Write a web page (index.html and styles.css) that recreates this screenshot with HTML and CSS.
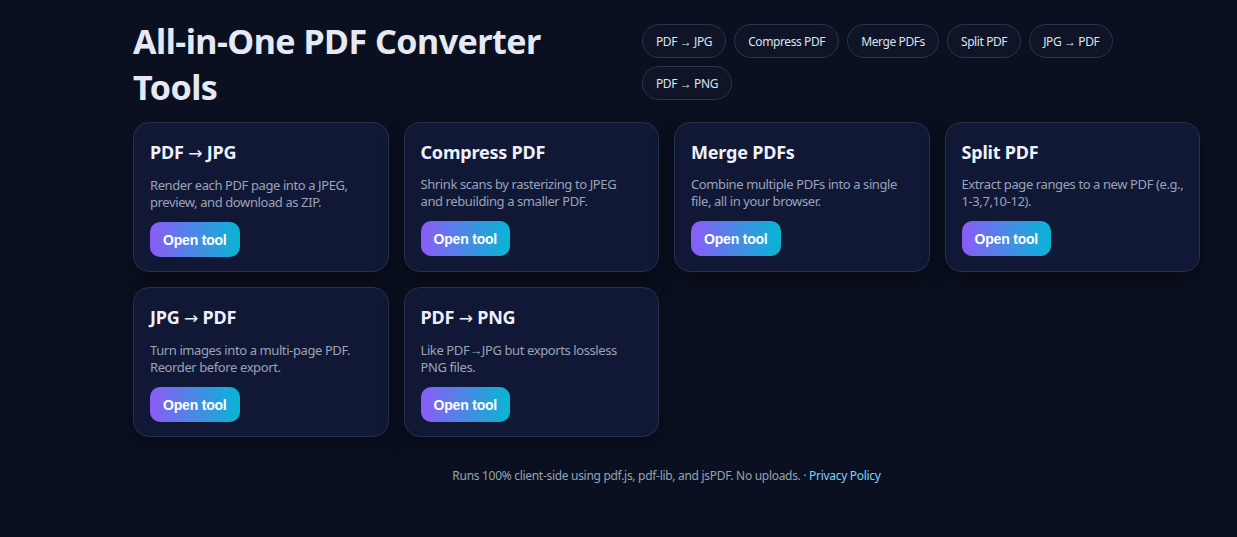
FILE: index.html
```html
<!DOCTYPE html>
<html lang="en">
<head>
<meta charset="utf-8">
<title>All-in-One PDF Converter Tools</title>
<link rel="stylesheet" href="styles.css">
</head>
<body>
<div class="wrap">
  <header class="top">
    <h1 class="title">All-in-One PDF Converter Tools</h1>
    <nav class="chips">
      <a class="chip" href="#">PDF → JPG</a>
      <a class="chip" href="#">Compress PDF</a>
      <a class="chip" href="#">Merge PDFs</a>
      <a class="chip" href="#">Split PDF</a>
      <a class="chip" href="#">JPG → PDF</a>
      <a class="chip" href="#">PDF → PNG</a>
    </nav>
  </header>
  <main class="grid">
    <section class="card">
      <h2 class="card-title">PDF <span class="arr">→</span> JPG</h2>
      <p class="card-desc">Render each PDF page into a JPEG, preview, and download as ZIP.</p>
      <a class="btn" href="#">Open tool</a>
    </section>
    <section class="card">
      <h2 class="card-title">Compress PDF</h2>
      <p class="card-desc">Shrink scans by rasterizing to JPEG<br>and rebuilding a smaller PDF.</p>
      <a class="btn" href="#">Open tool</a>
    </section>
    <section class="card">
      <h2 class="card-title">Merge PDFs</h2>
      <p class="card-desc">Combine multiple PDFs into a single file, all in your browser.</p>
      <a class="btn" href="#">Open tool</a>
    </section>
    <section class="card">
      <h2 class="card-title">Split PDF</h2>
      <p class="card-desc">Extract page ranges to a new PDF (e.g., 1-3,7,10-12).</p>
      <a class="btn" href="#">Open tool</a>
    </section>
    <section class="card">
      <h2 class="card-title">JPG <span class="arr">→</span> PDF</h2>
      <p class="card-desc">Turn images into a multi-page PDF. Reorder before export.</p>
      <a class="btn" href="#">Open tool</a>
    </section>
    <section class="card">
      <h2 class="card-title">PDF <span class="arr">→</span> PNG</h2>
      <p class="card-desc">Like PDF→JPG but exports lossless PNG files.</p>
      <a class="btn" href="#">Open tool</a>
    </section>
  </main>
  <footer class="foot">Runs 100% client-side using pdf.js, pdf-lib, and jsPDF. No uploads. · <a class="link" href="#">Privacy Policy</a></footer>
</div>
</body>
</html>
```
FILE: styles.css
```css
* { box-sizing: border-box; }
html, body { margin: 0; padding: 0; }
body {
  background: #0b1020;
  color: #e5e9f5;
  font-family: "Noto Sans", "Open Sans", sans-serif;
}
.wrap {
  width: 1067px;
  margin-left: 133px;
  padding-top: 18px;
}
.top {
  display: flex;
  align-items: flex-start;
  gap: 24px;
}
.title {
  margin: 0;
  width: 485px;
  font-size: 34px;
  line-height: 46px;
  font-weight: 700;
  color: #e5e9f5;
  letter-spacing: -0.5px;
}
.chips {
  display: flex;
  flex-wrap: wrap;
  gap: 8px;
  width: 480px;
  padding-top: 6px;
}
.chip {
  display: inline-flex;
  align-items: center;
  height: 34px;
  padding: 0 13px;
  border: 1px solid #2a3350;
  border-radius: 999px;
  background: #0f1527;
  color: #dbe3f0;
  font-size: 12px;
  letter-spacing: -0.4px;
  text-decoration: none;
}
.grid {
  display: grid;
  grid-template-columns: repeat(4, 1fr);
  gap: 15px;
  margin-top: 12px;
}
.card {
  height: 150px;
  padding: 16px 15px 16px 16px;
  border: 1px solid #27304c;
  border-radius: 16px;
  background: #111835;
  box-shadow: 0 8px 20px rgba(0, 0, 0, 0.35);
}
.card-title {
  margin: 1px 0 0;
  font-size: 18px;
  line-height: 24px;
  font-weight: 700;
  color: #eef1fa;
  letter-spacing: -0.2px;
}
.arr {
  font-family: "DejaVu Sans", sans-serif;
  font-weight: 400;
  font-size: 17px;
}
.card-desc {
  margin: 12px 0 11px;
  font-size: 13px;
  line-height: 17px;
  color: #9aa3b8;
  letter-spacing: -0.4px;
}
.btn {
  display: inline-flex;
  align-items: center;
  height: 35px;
  padding: 0 13px;
  border-radius: 10px;
  background: linear-gradient(90deg, #8b5cf6, #06b6d4);
  color: #fff;
  font-family: "Liberation Sans", Arial, sans-serif;
  font-size: 14px;
  font-weight: 700;
  letter-spacing: -0.2px;
  text-decoration: none;
}
.foot {
  margin-top: 30px;
  text-align: center;
  font-size: 12px;
  color: #94a3b8;
  letter-spacing: -0.3px;
}
.link {
  color: #7dd3fc;
  text-decoration: none;
}
```
